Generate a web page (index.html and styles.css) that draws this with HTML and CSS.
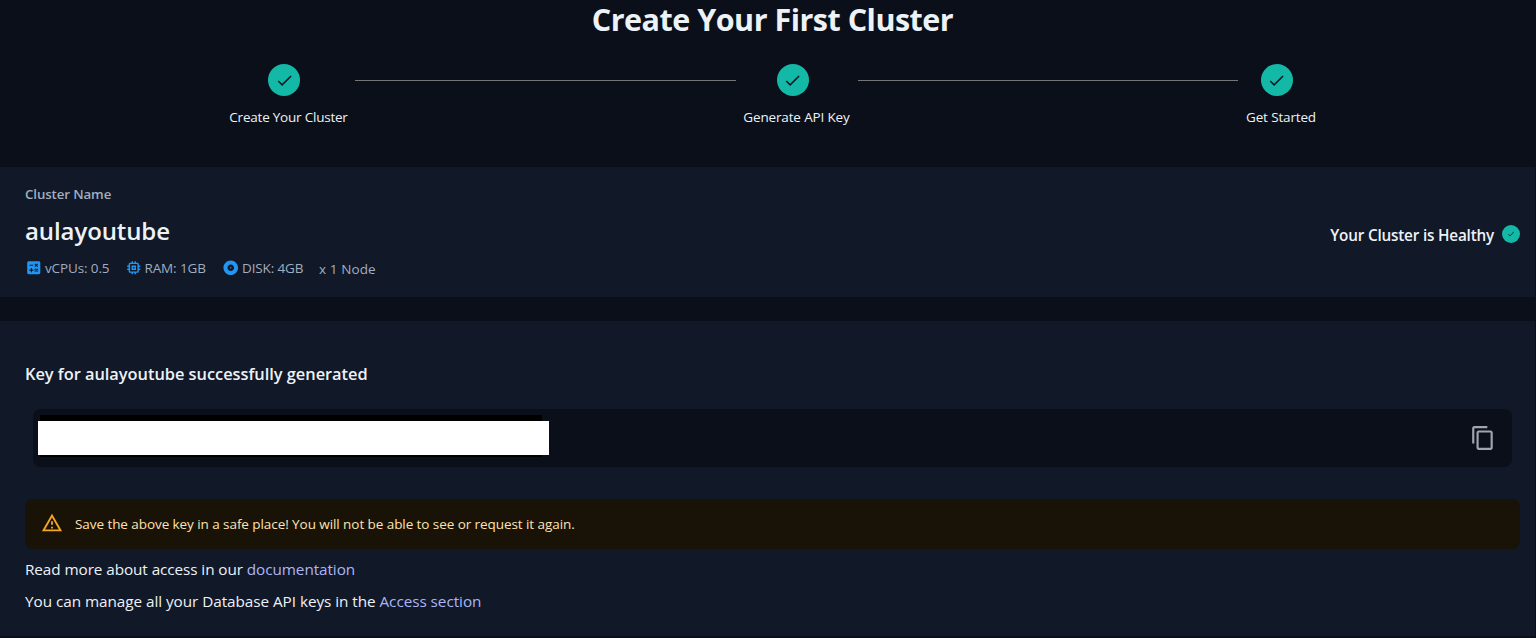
FILE: index.html
```html
<!DOCTYPE html>
<html lang="en">
<head>
<meta charset="utf-8">
<title>Create Your First Cluster</title>
<link rel="stylesheet" href="styles.css">
</head>
<body>
<svg class="defs" aria-hidden="true">
  <symbol id="check" viewBox="0 0 24 24"><path d="M9 16.17 4.83 12l-1.42 1.41L9 19 21 7l-1.41-1.41z"/></symbol>
</svg>
<header class="intro">
  <h1 class="title">Create Your First Cluster</h1>
  <div class="stepper">
    <div class="step step-cluster"><span class="dot"><svg><use href="#check"/></svg></span><span class="step-label">Create Your Cluster</span></div>
    <div class="connector"></div>
    <div class="step step-key"><span class="dot"><svg><use href="#check"/></svg></span><span class="step-label">Generate API Key</span></div>
    <div class="connector"></div>
    <div class="step step-start"><span class="dot"><svg><use href="#check"/></svg></span><span class="step-label">Get Started</span></div>
  </div>
</header>
<section class="card cluster">
  <div class="cluster-info">
    <div class="caption"><span>Cluster Name</span></div>
    <h2 class="cluster-name"><span>aulayoutube</span></h2>
    <div class="specs">
      <div class="spec spec-cpu"><svg viewBox="0 0 24 24"><path d="M19 3H5c-1.1 0-2 .9-2 2v14c0 1.1.9 2 2 2h14c1.1 0 2-.9 2-2V5c0-1.1-.9-2-2-2m-5.97 4.06L14.09 6l1.41 1.41L16.91 6l1.06 1.06-1.41 1.41 1.41 1.41-1.06 1.06-1.41-1.4-1.41 1.41-1.06-1.06 1.41-1.41zm-6.78.66h5v1.5h-5zM11.5 16h-2v2H8v-2H6v-1.5h2v-2h1.5v2h2zm6.5 1.25h-5v-1.5h5zm0-2.5h-5v-1.5h5z"/></svg><span>vCPUs: 0.5</span></div>
      <div class="spec spec-ram"><svg viewBox="0 0 24 24"><path d="M15 9H9v6h6zm-2 4h-2v-2h2zm8-2V9h-2V7c0-1.1-.9-2-2-2h-2V3h-2v2h-2V3H9v2H7c-1.1 0-2 .9-2 2v2H3v2h2v2H3v2h2v2c0 1.1.9 2 2 2h2v2h2v-2h2v2h2v-2h2c1.1 0 2-.9 2-2v-2h2v-2h-2v-2h2zm-4 6H7V7h10z"/></svg><span>RAM: 1GB</span></div>
      <div class="spec spec-disk"><svg viewBox="0 0 24 24"><path d="M12 2C6.48 2 2 6.48 2 12s4.48 10 10 10 10-4.48 10-10S17.52 2 12 2m0 14.5c-2.49 0-4.5-2.01-4.5-4.5S9.51 7.5 12 7.5s4.5 2.01 4.5 4.5-2.01 4.5-4.5 4.5m0-5.5c-.55 0-1 .45-1 1s.45 1 1 1 1-.45 1-1-.45-1-1-1"/></svg><span>DISK: 4GB</span></div>
      <div class="nodes"><span>x 1 Node</span></div>
    </div>
  </div>
  <div class="health"><span class="health-text">Your Cluster is Healthy</span><span class="dot dot-small"><svg><use href="#check"/></svg></span></div>
</section>
<section class="card key">
  <h3 class="key-title"><span>Key for aulayoutube successfully generated</span></h3>
  <div class="key-box">
    <div class="key-shade"><div class="key-value"></div></div>
    <svg class="copy" viewBox="0 0 24 24"><path d="M16 1H4c-1.1 0-2 .9-2 2v14h2V3h12zm3 4H8c-1.1 0-2 .9-2 2v14c0 1.1.9 2 2 2h11c1.1 0 2-.9 2-2V7c0-1.1-.9-2-2-2m0 16H8V7h11z"/></svg>
  </div>
  <div class="alert">
    <svg viewBox="0 0 24 24"><path d="M12 5.99 19.53 19H4.47zM12 2 1 21h22zm1 14h-2v2h2zm0-6h-2v4h2z"/></svg>
    <span>Save the above key in a safe place! You will not be able to see or request it again.</span>
  </div>
  <p class="note note-docs">Read more about access in our <a>documentation</a></p>
  <p class="note note-access">You can manage all your Database API keys in the <a>Access section</a></p>
</section>
</body>
</html>
```

FILE: styles.css
```css
* { box-sizing: border-box; }
html, body { height: 100%; }
body {
  margin: 0;
  overflow: hidden;
  background: #0b0f19;
  color: #edf2f7;
  font-family: "Open Sans", "Noto Sans", sans-serif;
  font-size: 14px;
}
h1, h2, h3, p { margin: 0; }
.defs { display: none; }
svg { display: block; flex: none; fill: currentColor; }

.intro { height: 167px; }
.title {
  padding-left: 9px;
  height: 40px;
  font-size: 30.5px;
  line-height: 38px;
  font-weight: 700;
  letter-spacing: -0.5px;
  text-align: center;
  white-space: nowrap;
}
.stepper {
  display: flex;
  align-items: flex-start;
  gap: 7px;
  width: 1087px;
  margin: 24px 0 0 229px;
}
.step { display: flex; flex-direction: column; align-items: center; white-space: nowrap; }
.step-cluster { width: 119px; }
.step-key { width: 108px; }
.step-start { width: 70px; }
.connector { flex: 1; height: 1px; margin-top: 16px; background: #757575; }
.connector:nth-last-child(2) { margin-right: 1px; }
.dot {
  display: flex;
  align-items: center;
  justify-content: center;
  width: 32px;
  height: 32px;
  margin-right: 9px;
  border-radius: 50%;
  background: #14b8a6;
  color: #111827;
}
.step-key .dot { margin-right: 8px; }
.dot svg { width: 19px; height: 19px; }
.step-label { margin-top: 11px; font-size: 13.5px; line-height: 20px; letter-spacing: -0.15px; }
.step-cluster .step-label { letter-spacing: -0.22px; }

.card { width: 1535px; background: #111827; }
.cluster {
  display: flex;
  justify-content: space-between;
  height: 130px;
  padding: 17px 15px 0 25px;
  white-space: nowrap;
}
.caption { font-size: 13.3px; line-height: 20px; font-weight: 600; color: #a0aec0; letter-spacing: -0.12px; }
.cluster-name { margin-top: 11px; font-size: 24px; line-height: 32px; font-weight: 600; letter-spacing: -0.1px; }
.specs { display: flex; margin-top: 11px; color: #a0aec0; line-height: 20px; font-size: 13.5px; letter-spacing: -0.13px; }
.spec { display: flex; align-items: center; gap: 2.5px; height: 20px; }
.spec svg { width: 17.5px; height: 17.5px; color: #2196f3; }
.spec-cpu { width: 99.5px; }
.spec-ram { width: 97.5px; }
.spec-disk { width: 97px; }
.nodes { margin-top: 1px; letter-spacing: 0.1px; }
.health { display: flex; align-items: center; gap: 8px; height: 20px; margin-top: 40px; }
.health-text { padding-top: 1px; font-size: 15.3px; line-height: 20px; font-weight: 600; letter-spacing: -0.2px; }
.dot-small { width: 18px; height: 18px; margin: 0; }
.dot-small svg { width: 8px; height: 8px; }

.key { height: 315px; margin-top: 24px; padding: 40px 15px 0 25px; }
.key-title { font-size: 16.4px; line-height: 26px; font-weight: 600; letter-spacing: -0.03px; white-space: nowrap; }
.key-box {
  display: flex;
  align-items: flex-start;
  justify-content: space-between;
  height: 58px;
  margin: 22px 8px 0;
  padding: 6px 16px 0 5px;
  border-radius: 8px;
  background: #0b0f19;
}
.key-shade {
  width: 511px;
  height: 42px;
  padding-top: 6px;
  background: linear-gradient(#000, #000) 2px 0 / 502px 42px no-repeat;
}
.key-value { height: 34px; background: #fff; }
.copy { width: 26px; height: 26px; margin-top: 10px; color: #a0a6b1; }
.alert {
  display: flex;
  align-items: center;
  gap: 12px;
  height: 50px;
  margin-top: 32px;
  padding-left: 16px;
  border-radius: 8px;
  background: #191207;
  color: #ffe2b0;
  font-size: 13.5px;
  letter-spacing: -0.07px;
  white-space: nowrap;
}
.alert svg { width: 22px; height: 22px; margin-top: -2px; color: #f5a623; }
.note { height: 32px; font-size: 15.3px; line-height: 32px; letter-spacing: -0.05px; white-space: nowrap; }
.note-docs { margin-top: 4px; letter-spacing: -0.08px; }
.note a { color: #abb5f5; }
```
